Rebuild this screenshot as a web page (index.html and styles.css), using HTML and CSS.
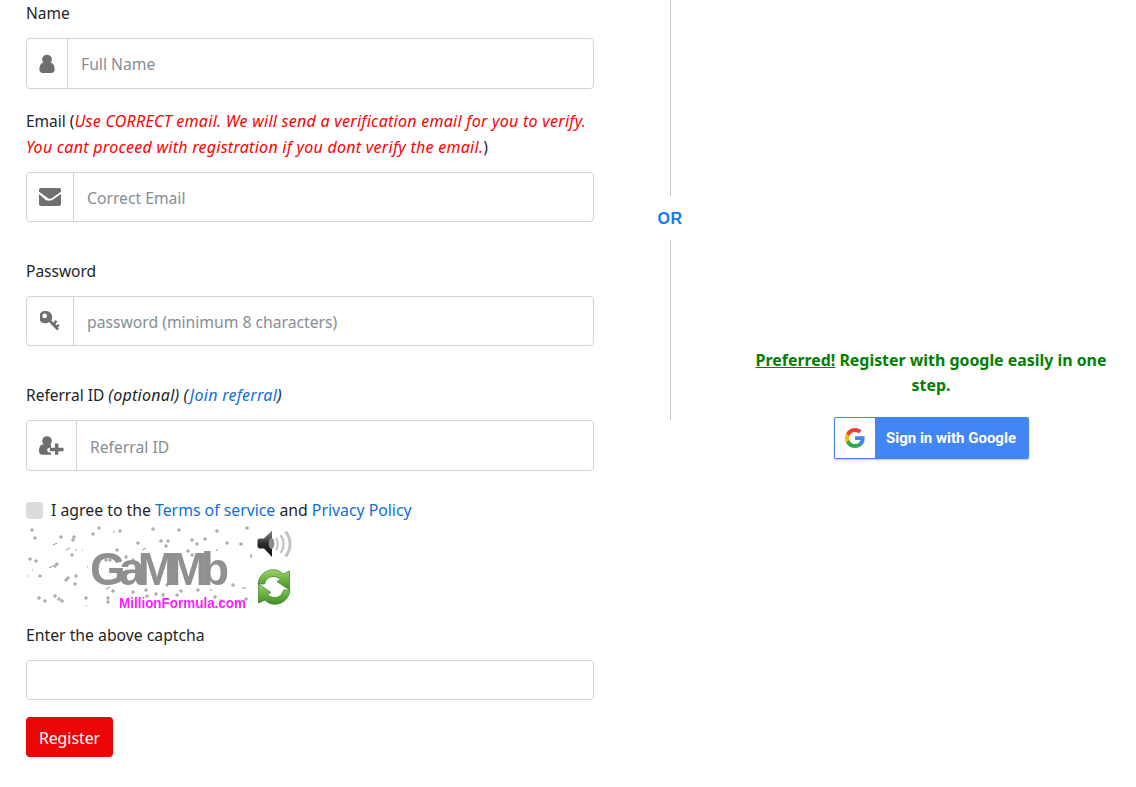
FILE: index.html
```html
<!DOCTYPE html>
<html lang="en">
<head>
<meta charset="utf-8">
<title>Register</title>
<link rel="stylesheet" href="styles.css">
</head>
<body>
<main class="page">
  <form class="form">
    <label class="label name-label">Name</label>
    <div class="group g-name">
      <span class="addon a-name"><svg class="ic" width="16" height="20" viewBox="0 0 16 20"><circle cx="8" cy="5.600" r="4.900"/><path d="M.4 15.500C.4 11.500 2 9 4 9h8c2 0 3.600 2.500 3.600 6.500 0 2.300-1.400 3.500-3.200 3.500H3.600C1.800 19 .4 17.800.4 15.500z"/></svg></span>
      <input class="field" placeholder="Full Name">
    </div>
    <p class="label email-label">Email (<em class="warn">Use CORRECT email. We will send a verification email for you to verify. You cant proceed with registration if you dont verify the email.</em>)</p>
    <div class="group g-mail">
      <span class="addon a-mail"><svg class="ic" width="22" height="18" viewBox="0 0 22 18"><path d="M0 3.800V1.900C0 .9.800 0 1.900 0h18.200C21.200 0 22 .9 22 1.900v1.900l-9.200 6.400c-1.100.7-2.500.7-3.600 0z"/><path d="M0 6v10.100C0 17.100.8 18 1.900 18h18.200c1.100 0 1.900-.9 1.900-1.900V6l-8.300 5.800c-1.700 1.200-5.700 1.200-7.400 0z"/></svg></span>
      <input class="field field-low" placeholder="Correct Email">
    </div>
    <label class="label pw-label">Password</label>
    <div class="group g-pw">
      <span class="addon a-mail"><svg class="ic" width="21" height="20" viewBox="0 0 21 20"><path fill-rule="evenodd" d="M6 0a6.200 6.200 0 0 1 5.300 9.400l2.200 2.100 2-2.600 2 1.500-2.100 2.600 1.300 1.300 1.700-1.200 1.300 1.700-2 1.500 1.200 1.500-1.700 1.600-8.200-8.400A6.200 6.200 0 1 1 6 0zm-1.300 2.600a2.300 2.300 0 1 0 0 4.600 2.300 2.300 0 0 0 0-4.600z"/></svg></span>
      <input class="field field-low" placeholder="password (minimum 8 characters)">
    </div>
    <p class="label ref-label">Referral ID <em>(optional)</em> <em>(<a href="#">Join referral</a>)</em></p>
    <div class="group g-ref">
      <span class="addon a-ref"><svg class="ic" width="25" height="19" viewBox="0 0 25 19"><circle cx="8" cy="5" r="4.800"/><path d="M0 15c0-3.600 1.400-6.500 3.400-6.500h8.600v3.300h-1.500c-1.400 0-2.300 1-2.300 2.300 0 1.300.9 2.300 2.300 2.300H12V18.800H3.300C1.300 18.800 0 17.300 0 15z"/><path d="M16 7.500h3.400v4.300H24.500v3.400h-5.100v3.600H16v-3.600h-5.200v-3.400H16z"/></svg></span>
      <input class="field field-low" placeholder="Referral ID">
    </div>
    <div class="agree">
      <span class="check"></span>
      <span>I agree to the <a href="#">Terms of service</a> and <a href="#">Privacy Policy</a></span>
    </div>
    <div class="captcha">
      <svg class="captcha-img" width="226" height="84" viewBox="26 527 226 84">
        <path class="specks" d="M30 530h4M32 528v4M33 538h4M35 536v4M59 537h4M61 535v4M72 537h4M74 535v4M71 540h4M73 538v4M91 534h4M93 532v4M97 528h4M99 526v4M118 531h4M120 529v4M113 532h2M53 545l4-2M66 550l4-2M70 555h4M72 553v4M82 550h1M75 550h2M28 559h4M30 557v4M34 561h4M36 559v4M55 564h4M57 562v4M49 568l4-2M53 566h4M55 564v4M32 570h1M38 576h4M40 574v4M66 578h4M68 576v4M64 580h4M66 578v4M74 576h4M76 574v4M73 584h4M75 582v4M87 567h1M28 576h1M106 589l4-2M111 591h4M113 589v4M37 598h4M39 596v4M43 601h4M45 599v4M53 596h4M55 594v4M57 599h4M59 597v4M60 601h4M62 599v4M84 598h4M86 596v4M86 606h1M106 598h4M108 596v4M106 602h4M108 600v4M104 560h4M106 558v4M108 560h4M110 558v4M124 557h4M126 555v4M115 550h4M117 548v4M131 560h4M133 558v4M136 543h4M138 541v4M142 550l4-2M151 529h4M153 527v4M177 530h4M179 528v4M215 531h4M217 529v4M245 528h4M247 526v4M159 541h4M161 539v4M166 541h4M168 539v4M190 540h4M192 538v4M195 544h4M197 542v4M203 539h4M205 537v4M225 543h4M227 541v4M239 544h4M241 542v4M164 546h4M166 544v4M186 551h4M188 549v4M216 550h2M250 556h2M251 554v4M190 555h4M192 553v4M144 590h4M146 588v4M154 594h4M156 592v4M145 596h4M147 594v4M179 591h4M181 589v4M165 585h4M167 583v4M196 590h4M198 588v4M231 585h4M233 583v4M242 588h4M210 590h2M213 597h4M215 595v4M175 595h4M177 593v4M244 599h4M246 597v4M220 600h2M161 595h4M163 593v4M131 592h4M133 590v4"/>
        <text class="cap-word" x="90" y="585" textLength="139" lengthAdjust="spacing">GaMMb</text>
        <text class="cap-mark" x="119" y="608" textLength="127" lengthAdjust="spacingAndGlyphs">MillionFormula.com</text>
      </svg>
      <div class="cap-tools">
        <svg width="36" height="30" viewBox="0 0 36 30">
          <defs><linearGradient id="cone" x1="0" y1="0" x2="0" y2="1"><stop offset="0" stop-color="#8c8c8c"/><stop offset=".5" stop-color="#2a2a2a"/><stop offset="1" stop-color="#111"/></linearGradient></defs>
          <path d="M19 9c2.500 3 2.500 9 0 12" class="arc"/><path d="M23.500 6c4 5 4 13 0 18" class="arc"/><path d="M28.500 2.500c6 7 6 18 0 25" class="arc arc-wide"/>
          <path d="M.5 12c0-1.500 1-2.500 2.500-2.500h4L15 1.500V28L7 19.500H3c-1.500 0-2.500-1-2.500-2.500z" fill="url(#cone)"/>
          <ellipse cx="14.500" cy="14.500" rx="2.800" ry="5.500" fill="#8a8a8a"/>
        </svg>
        <svg width="34" height="36" viewBox="0 0 34 36">
          <defs><linearGradient id="leaf" x1="0" y1="0" x2="0" y2="1"><stop offset="0" stop-color="#9ad463"/><stop offset="1" stop-color="#3f8e25"/></linearGradient></defs>
          <path d="M1 15C2 6 9 .7 16 .7c4 0 7.500 1.500 10 4.300L32.500 2v19L20 12.500l3.500-2C21.500 8.500 19 7.500 16 7.500c-4 0-7.500 3-8.500 7.500z" fill="url(#leaf)" stroke="#3c7d22" stroke-width=".7"/>
          <path d="M33 21c-1 9-8 14.300-15 14.300-4 0-7.500-1.500-10-4.300L1.500 34V15L14 23.500l-3.500 2c2 2 4.500 3 7.500 3 4 0 7.500-3 8.500-7.500z" fill="url(#leaf)" stroke="#3c7d22" stroke-width=".7"/>
        </svg>
      </div>
    </div>
    <label class="label cap-label">Enter the above captcha</label>
    <input class="field solo">
    <button class="register" type="button">Register</button>
  </form>
  <div class="divider">
    <span class="rule r-top"></span>
    <span class="or">OR</span>
    <span class="rule r-bottom"></span>
  </div>
  <aside class="side">
    <p class="pref"><u>Preferred!</u> Register with google easily in one step.</p>
    <button class="gbtn" type="button">
      <span class="gicon"><svg width="20" height="20" viewBox="0 0 18 18"><path fill="#4285F4" d="M17.640 9.200c0-.637-.057-1.251-.164-1.840H9v3.481h4.844c-.209 1.125-.843 2.078-1.796 2.717v2.258h2.908c1.702-1.567 2.684-3.874 2.684-6.615z"/><path fill="#34A853" d="M9 18c2.430 0 4.467-.806 5.956-2.180l-2.908-2.259c-.806.540-1.837.860-3.048.860-2.344 0-4.328-1.584-5.036-3.711H.957v2.332A8.997 8.997 0 0 0 9 18z"/><path fill="#FBBC05" d="M3.964 10.710A5.410 5.410 0 0 1 3.682 9c0-.593.102-1.170.282-1.710V4.958H.957A8.996 8.996 0 0 0 0 9c0 1.452.348 2.827.957 4.042l3.007-2.332z"/><path fill="#EA4335" d="M9 3.580c1.321 0 2.508.454 3.440 1.345l2.582-2.580C13.463.891 11.426 0 9 0A8.997 8.997 0 0 0 .957 4.958L3.964 7.290C4.672 5.163 6.656 3.580 9 3.580z"/></svg></span>
      <span class="gtext">Sign in with Google</span>
    </button>
  </aside>
</main>
</body>
</html>
```
FILE: styles.css
```css
* { box-sizing: border-box; }
html, body { margin: 0; padding: 0; background: #fff; }
body {
  font-family: "Noto Sans", "Open Sans", sans-serif;
  font-size: 15.5px;
  line-height: 26px;
  color: #212529;
  height: 787px;
  overflow: hidden;
}
a { color: #0f6fd6; text-decoration: none; }
em { font-size: 16px; letter-spacing: .27px; }
.page { display: flex; align-items: flex-start; padding-left: 26px; }
.form { width: 568px; flex: none; display: flex; flex-direction: column; }
.label { display: block; margin: 0; }
.name-label { height: 26px; margin-bottom: 12px; }
.email-label { margin-top: 19px; margin-bottom: 12px; }
.pw-label { margin-top: 36px; margin-bottom: 12px; }
.ref-label { margin-top: 36px; margin-bottom: 12px; }
.cap-label { margin-top: 11px; margin-bottom: 12px; font-size: 15.75px; }
.warn { color: #f00; }
.group { display: flex; border: 1px solid #ced4da; border-radius: 4px; }
.g-name, .g-ref { height: 51px; }
.g-mail, .g-pw { height: 50px; }
.addon { flex: none; display: flex; align-items: center; justify-content: center; border-right: 1px solid #ced4da; }
.a-name { width: 41px; }
.a-mail { width: 47px; }
.a-ref { width: 50px; }
.ic { fill: #6f6f6f; }
.field {
  flex: 1;
  min-width: 0;
  border: 0;
  outline: 0;
  padding: 0 13px;
  background: transparent;
  font: inherit;
  font-size: 15.7px;
  color: #495057;
}
.field-low { padding-top: 2px; }
.field::placeholder { color: #868e96; opacity: 1; }
.solo { flex: none; width: 100%; height: 40px; border: 1px solid #ced4da; border-radius: 4px; }
.agree { display: flex; align-items: center; gap: 8px; margin-top: 26px; height: 26px; font-size: 15.8px; }
.check { width: 17px; height: 17px; border-radius: 4px; background: #dcdcdc; flex: none; }
.captcha { display: flex; height: 84px; gap: 5px; margin-top: 4px; }
.captcha-img { flex: none; overflow: visible; filter: blur(.4px); }
.specks { fill: none; stroke: #969696; stroke-width: 1; }
.cap-word { font: 700 46px "Liberation Sans", sans-serif; fill: #909090; }
.cap-mark { font: 700 14px "Liberation Sans", sans-serif; fill: #ff1cff; }
.cap-tools { display: flex; flex-direction: column; gap: 10px; padding-top: 2px; }
.arc { fill: none; stroke: #c4c4c4; stroke-width: 2.2; }
.arc-wide { stroke-width: 3; }
.register {
  align-self: flex-start;
  margin-top: 17px;
  width: 87px;
  height: 40px;
  border: 0;
  border-radius: 4px;
  background: #ec0505;
  color: #fff;
  font: inherit;
  font-size: 15.8px;
  padding: 2px 0 0;
}
.divider { flex: none; width: 0; margin-left: 76px; height: 420px; display: flex; flex-direction: column; align-items: center; }
.rule { width: 1px; background: #ccc; flex: none; }
.r-top { height: 196px; }
.r-bottom { height: 180px; }
.or { flex: none; height: 44px; padding-top: 1px; font: 700 16px/44px "Liberation Sans", sans-serif; letter-spacing: .4px; color: #0d7bf2; }
.side { flex: none; width: 380px; margin-left: 71px; padding-top: 348px; display: flex; flex-direction: column; align-items: center; }
.pref { margin: 0 0 19px; text-align: center; color: #008000; font-weight: 700; font-size: 15.9px; line-height: 25px; }
.gbtn { display: flex; width: 195px; height: 42px; padding: 1px; border: 0; border-radius: 2px; background: #4285f4; box-shadow: 0 1px 2px rgba(0,0,0,.25); }
.gicon { width: 40px; flex: none; display: flex; align-items: center; justify-content: center; background: #fff; border-radius: 1px; }
.gtext { flex: 1; text-align: center; font: 700 15px/40px Roboto, sans-serif; color: #fff; }
```
